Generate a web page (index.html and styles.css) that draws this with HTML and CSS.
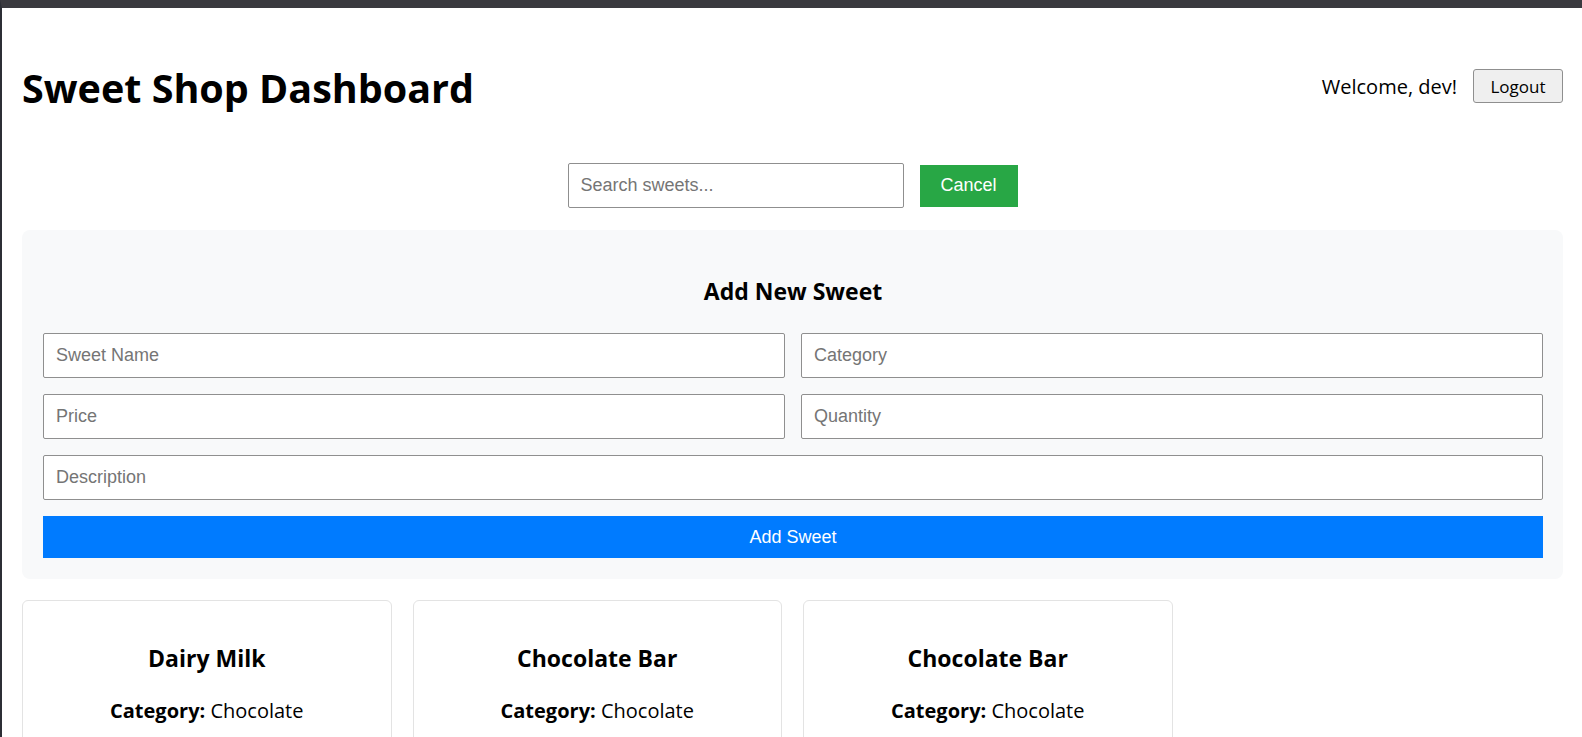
FILE: index.html
```html
<!DOCTYPE html>
<html lang="en">
<head>
<meta charset="utf-8">
<title>Sweet Shop Dashboard</title>
<link rel="stylesheet" href="styles.css">
</head>
<body>
<div class="frame">
  <div class="page">
    <header class="header">
      <h1 class="title">Sweet Shop Dashboard</h1>
      <div class="user">
        <span class="welcome">Welcome, dev!</span>
        <button class="logout" type="button">Logout</button>
      </div>
    </header>

    <div class="search-row">
      <input class="search" type="text" placeholder="Search sweets...">
      <button class="cancel" type="button">Cancel</button>
    </div>

    <section class="panel">
      <h3 class="panel-title">Add New Sweet</h3>
      <form class="form-grid">
        <input class="field" type="text" placeholder="Sweet Name">
        <input class="field" type="text" placeholder="Category">
        <input class="field" type="text" placeholder="Price">
        <input class="field" type="text" placeholder="Quantity">
        <input class="field wide" type="text" placeholder="Description">
        <button class="add-btn wide" type="button">Add Sweet</button>
      </form>
    </section>

    <section class="cards">
      <div class="card">
        <h3 class="card-title">Dairy Milk</h3>
        <p class="card-line"><b>Category:</b> Chocolate</p>
      </div>
      <div class="card">
        <h3 class="card-title">Chocolate Bar</h3>
        <p class="card-line"><b>Category:</b> Chocolate</p>
      </div>
      <div class="card">
        <h3 class="card-title">Chocolate Bar</h3>
        <p class="card-line"><b>Category:</b> Chocolate</p>
      </div>
    </section>
  </div>
</div>
</body>
</html>
```
FILE: styles.css
```css
* { box-sizing: border-box; }

html, body {
  margin: 0;
  padding: 0;
  background: #ffffff;
  height: 100%;
  overflow: hidden;
}

body {
  font-family: "Open Sans", "Noto Sans", sans-serif;
  color: #000;
  font-size: 20px;
}

.frame {
  border-top: 8px solid #3a3a3f;
  border-left: 2px solid #2c2e35;
  min-height: 100%;
}

.page {
  padding: 0 19px 0 20px;
}

.header {
  display: flex;
  justify-content: space-between;
  align-items: center;
  padding-top: 56px;
}

.title {
  margin: 0;
  font-size: 39.5px;
  line-height: 48px;
  font-weight: 700;
}

.user {
  display: flex;
  align-items: center;
  gap: 16px;
  margin-top: -4px;
}

.welcome {
  font-size: 20px;
}

.logout {
  font-family: "Open Sans", "Noto Sans", sans-serif;
  font-size: 17px;
  width: 90px;
  height: 34px;
  background: #efefef;
  border: 1px solid #8f8f8f;
  border-radius: 3px;
  color: #000;
  padding: 0;
}

.search-row {
  display: flex;
  justify-content: center;
  align-items: center;
  gap: 16px;
  margin-top: 51px;
}

.search {
  width: 336px;
  height: 45px;
  border: 1px solid #8f8f8f;
  border-radius: 2px;
  padding: 0 12px;
  font-family: "Liberation Sans", Arial, sans-serif;
  font-size: 18px;
}

.search::placeholder, .field::placeholder {
  color: #757575;
}

.cancel {
  width: 98px;
  height: 42px;
  background: #28a745;
  color: #fff;
  border: none;
  font-family: "Liberation Sans", Arial, sans-serif;
  font-size: 18px;
  padding: 0;
}

.panel {
  margin-top: 22px;
  background: #f8f9fa;
  border-radius: 8px;
  padding: 20px 20px 21px 21px;
}

.panel-title {
  margin: 24px 0 25px;
  font-size: 23px;
  line-height: 34px;
  text-align: center;
  font-weight: 700;
}

.form-grid {
  display: grid;
  grid-template-columns: 1fr 1fr;
  gap: 16px;
  margin: 0;
}

.field {
  height: 45px;
  border: 1px solid #8f8f8f;
  border-radius: 2px;
  padding: 0 12px;
  font-family: "Liberation Sans", Arial, sans-serif;
  font-size: 18px;
  background: #fff;
}

.wide {
  grid-column: 1 / -1;
}

.add-btn {
  height: 42px;
  background: #007bff;
  color: #fff;
  border: none;
  font-family: "Liberation Sans", Arial, sans-serif;
  font-size: 18px;
}

.cards {
  display: grid;
  grid-template-columns: repeat(4, 1fr);
  gap: 21px;
  margin-top: 21px;
}

.card {
  border: 1px solid #e3e3e3;
  border-radius: 6px;
  padding: 20px;
  text-align: center;
  height: 200px;
}

.card-title {
  margin: 21px 0 23px;
  font-size: 23px;
  line-height: 32px;
  font-weight: 700;
}

.card-line {
  margin: 0;
  font-size: 20px;
  line-height: 28px;
}
```
